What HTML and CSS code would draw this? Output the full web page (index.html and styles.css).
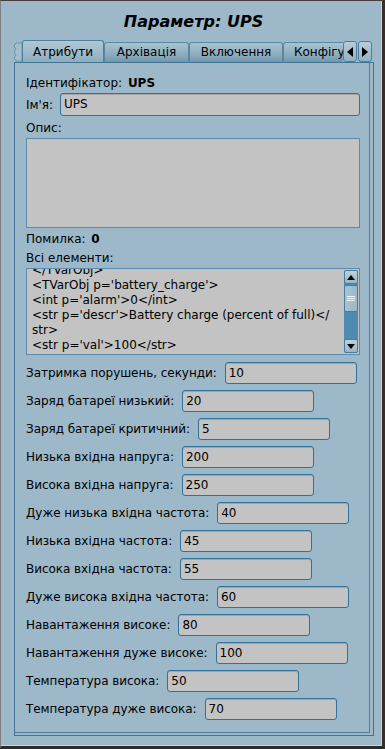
FILE: index.html
```html
<!DOCTYPE html>
<html>
<head>
  <title>Параметр: UPS</title>
  <link rel="stylesheet" href="styles.css">
</head>
<body>
  <div class="window">
    <!-- Titel -->
    <h1 class="title">Параметр: UPS</h1>

    <!-- Tabbalk -->
    <div class="tabbar">
      <div class="tab-cut">
        <svg width="9" height="20" viewBox="0 0 9 20">
          <path d="M9 1 H3 L1 4 L3 7 L1 10 L3 13 L1 16 L3 19 H9 Z" fill="#a3bfcd" stroke="#6b93aa" stroke-width="1"/>
        </svg>
      </div>
      <div class="tab active">Атрибути</div>
      <div class="tab t-arch">Архівація</div>
      <div class="tab t-incl">Включення</div>
      <div class="tab t-conf">Конфігурація</div>
      <div class="tab-arrows">
        <div class="arrow-btn">
          <svg width="8" height="10" viewBox="0 0 8 10"><path d="M7 0 V10 L1 5 Z" fill="#000"/></svg>
        </div>
        <div class="arrow-btn">
          <svg width="8" height="10" viewBox="0 0 8 10"><path d="M1 0 V10 L7 5 Z" fill="#000"/></svg>
        </div>
      </div>
    </div>

    <!-- Paneel met attributen -->
    <div class="panel">
      <div class="line id-line">
        <span>Ідентифікатор:</span>
        <b>UPS</b>
      </div>

      <div class="field-row name-row">
        <label>Ім'я:</label>
        <div class="input wide">UPS</div>
      </div>

      <div class="line descr-label">Опис:</div>
      <div class="textbox descr"></div>

      <div class="line err-line">
        <span>Помилка:</span>
        <b>0</b>
      </div>

      <div class="line all-label">Всі елементи:</div>
      <div class="textbox xml">
        <div class="xml-view">
          <pre class="xml-text">&lt;/TVarObj&gt;
&lt;TVarObj p='battery_charge'&gt;
&lt;int p='alarm'&gt;0&lt;/int&gt;
&lt;str p='descr'&gt;Battery charge (percent of full)&lt;/
str&gt;
&lt;str p='val'&gt;100&lt;/str&gt;</pre>
        </div>
        <div class="scrollbar">
          <div class="sb-btn">
            <svg width="8" height="5" viewBox="0 0 8 5"><path d="M0 5 H8 L4 0 Z" fill="#000"/></svg>
          </div>
          <div class="sb-handle"><span></span><span></span><span></span></div>
          <div class="sb-groove"></div>
          <div class="sb-btn">
            <svg width="8" height="5" viewBox="0 0 8 5"><path d="M0 0 H8 L4 5 Z" fill="#000"/></svg>
          </div>
        </div>
      </div>

      <div class="field-row first">
        <label>Затримка порушень, секунди:</label>
        <div class="input">10</div>
      </div>
      <div class="field-row">
        <label>Заряд батареї низький:</label>
        <div class="input">20</div>
      </div>
      <div class="field-row">
        <label>Заряд батареї критичний:</label>
        <div class="input">5</div>
      </div>
      <div class="field-row">
        <label>Низька вхідна напруга:</label>
        <div class="input">200</div>
      </div>
      <div class="field-row">
        <label>Висока вхідна напруга:</label>
        <div class="input">250</div>
      </div>
      <div class="field-row">
        <label>Дуже низька вхідна частота:</label>
        <div class="input">40</div>
      </div>
      <div class="field-row">
        <label>Низька вхідна частота:</label>
        <div class="input">45</div>
      </div>
      <div class="field-row">
        <label>Висока вхідна частота:</label>
        <div class="input">55</div>
      </div>
      <div class="field-row">
        <label>Дуже висока вхідна частота:</label>
        <div class="input">60</div>
      </div>
      <div class="field-row">
        <label>Навантаження високе:</label>
        <div class="input">80</div>
      </div>
      <div class="field-row">
        <label>Навантаження дуже високе:</label>
        <div class="input">100</div>
      </div>
      <div class="field-row">
        <label>Температура висока:</label>
        <div class="input">50</div>
      </div>
      <div class="field-row">
        <label>Температура дуже висока:</label>
        <div class="input">70</div>
      </div>
    </div>
  </div>
</body>
</html>
```

FILE: styles.css
```css
/* Basis: venster vult het scherm */
html, body {
  margin: 0;
  padding: 0;
  background-color: #9db9c9;
}

body {
  font-family: "DejaVu Sans", sans-serif;
  font-size: 12px;
  color: #000;
}

/* Vensterrand */
.window {
  box-sizing: border-box;
  width: 385px;
  height: 749px;
  border-top: 1px solid #4a3c35;
  border-left: 1px solid #7f7f7f;
  border-right: 3px solid #3a2e29;
  border-bottom: 3px solid #2f2a27;
  box-shadow: inset -1px -1px 0 #c4d6e0;
  display: flex;
  flex-direction: column;
}

/* Titel */
.title {
  margin: 0;
  padding: 11px 0 9px 0;
  height: 19px;
  line-height: 19px;
  font-size: 16px;
  font-weight: bold;
  font-style: italic;
  text-align: center;
  padding-left: 4px;
}

/* Tabbalk */
.tabbar {
  display: flex;
  align-items: flex-end;
  height: 22px;
  margin-left: 12px;
  margin-right: 8px;
}

.tab-cut {
  width: 9px;
  height: 20px;
}

.tab-cut svg {
  display: block;
}

.tab {
  box-sizing: border-box;
  height: 20px;
  line-height: 19px;
  text-align: center;
  border: 1px solid #5b88a1;
  border-bottom: none;
  border-radius: 3px 3px 0 0;
  background: linear-gradient(#a9c3d1, #87a9bc 70%, #7196ab);
  white-space: nowrap;
  overflow: hidden;
}

.tab.active {
  width: 82px;
  height: 22px;
  line-height: 22px;
  background: linear-gradient(#afc8d5, #9db9c9 60%, #8fadbf);
  border-color: #4f7f9b;
}

.t-arch { width: 85px; }
.t-incl { width: 94px; }

.t-conf {
  width: 60px;
  text-align: left;
  padding-left: 10px;
  border-right: none;
  border-radius: 3px 0 0 0;
}

.tab-arrows {
  display: flex;
  gap: 1px;
  height: 21px;
  align-self: flex-start;
  margin-top: 1px;
}

.arrow-btn {
  box-sizing: border-box;
  width: 14px;
  height: 21px;
  border: 1px solid #4d7e9b;
  border-radius: 3px;
  background: linear-gradient(#b7cdd9, #93b2c4);
  display: flex;
  align-items: center;
  justify-content: center;
}

.arrow-btn svg {
  display: block;
}

/* Paneel */
.panel {
  box-sizing: border-box;
  margin: 0 8px 0 13px;
  height: 674px;
  border: 1px solid #3f7698;
  box-shadow: inset -3px -2px 0 #9db9c9, inset -4px -3px 0 #4a7f9e;
  padding: 0 0 0 11px;
  display: flex;
  flex-direction: column;
  align-items: flex-start;
}

.line {
  height: 14px;
  line-height: 14px;
  white-space: nowrap;
}

.line b {
  margin-left: 2px;
}

.id-line { margin-top: 13px; }
.descr-label { margin-top: 5px; }
.err-line { margin-top: 4px; }
.all-label { margin-top: 5px; }

/* Invoervelden */
.field-row {
  display: flex;
  align-items: center;
  gap: 8px;
  height: 22px;
  margin-top: 6px;
  white-space: nowrap;
}

.field-row label {
  letter-spacing: -0.05px;
}

.field-row.first { margin-top: 7px; }

.name-row {
  height: 23px;
  margin-top: 3px;
  gap: 7px;
}

.input {
  box-sizing: border-box;
  width: 132px;
  height: 22px;
  line-height: 20px;
  padding-left: 3px;
  background-color: #c3c3c3;
  border: 1px solid #31729a;
  border-radius: 3px;
  box-shadow: inset 0 1px 0 #a6a6a6;
}

.input.wide {
  width: 300px;
  height: 23px;
  line-height: 21px;
}

/* Tekstvakken */
.textbox {
  box-sizing: border-box;
  width: 334px;
  background-color: #c3c3c3;
  border: 1px solid #5c8cab;
  margin-top: 3px;
}

.descr {
  height: 90px;
}

.xml {
  height: 87px;
  display: flex;
}

.xml-view {
  flex: 1;
  overflow: hidden;
  padding-left: 5px;
}

.xml-text {
  margin: -6px 0 0 0;
  font-family: "DejaVu Sans", sans-serif;
  font-size: 12px;
  line-height: 15px;
}

/* Schuifbalk */
.scrollbar {
  width: 14px;
  margin: 1px 1px 1px 0;
  display: flex;
  flex-direction: column;
  background-color: #4d8bb1;
  border-radius: 2px;
}

.sb-btn {
  box-sizing: border-box;
  height: 14px;
  border: 1px solid #4a7d9b;
  border-radius: 2px;
  background: linear-gradient(#bcd1dc, #98b6c7);
  display: flex;
  align-items: center;
  justify-content: center;
}

.sb-btn svg {
  display: block;
}

.sb-handle {
  box-sizing: border-box;
  height: 27px;
  margin-top: 1px;
  border: 1px solid #4a7d9b;
  border-radius: 2px;
  background: linear-gradient(90deg, #a9c3d1, #9bb8c9);
  display: flex;
  flex-direction: column;
  align-items: center;
  justify-content: center;
  gap: 1px;
}

.sb-handle span {
  display: block;
  width: 8px;
  height: 1px;
  background-color: #f2f6f8;
}

.sb-groove {
  flex: 1;
}
```
